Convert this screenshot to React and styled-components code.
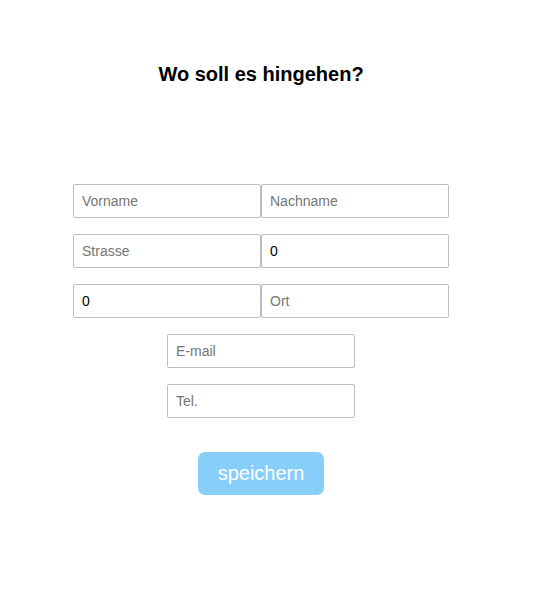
import React from "react";
import styled, { createGlobalStyle } from "styled-components";

const Global = createGlobalStyle`
  body { margin: 0; background: #fff; font-family: "Liberation Sans", Arial, sans-serif; }
`;

const Page = styled.div`
  width: 522px;
  display: flex;
  flex-direction: column;
  align-items: center;
  padding-top: 63px;
`;

const Title = styled.h1`
  margin: 0;
  font-size: 20px;
  line-height: 23px;
  font-weight: bold;
  color: #000;
`;

const Form = styled.form`
  margin-top: 98px;
  display: flex;
  flex-direction: column;
  align-items: center;
  gap: 16px;
`;

const Row = styled.div`
  display: flex;
`;

const Input = styled.input`
  box-sizing: border-box;
  width: 188px;
  height: 34px;
  margin: 0;
  padding: 0 8px;
  border: 1px solid #bdbdbd;
  border-radius: 2px;
  font-family: "Liberation Sans", Arial, sans-serif;
  font-size: 14px;
  color: #000;
  background: #fff;
  outline: none;
  &::placeholder { color: #757575; }
`;

const Button = styled.button`
  margin-top: 18px;
  height: 43px;
  padding: 0 20px;
  border: none;
  border-radius: 7px;
  background: #87cefa;
  color: #fff;
  font-family: "Liberation Sans", Arial, sans-serif;
  font-size: 20px;
  cursor: pointer;
`;

export default function App() {
  return (
    <>
      <Global />
      <Page>
        <Title>Wo soll es hingehen?</Title>
        <Form onSubmit={(e) => e.preventDefault()}>
          <Row>
            <Input placeholder="Vorname" />
            <Input placeholder="Nachname" />
          </Row>
          <Row>
            <Input placeholder="Strasse" />
            <Input type="number" defaultValue="0" />
          </Row>
          <Row>
            <Input type="number" defaultValue="0" />
            <Input placeholder="Ort" />
          </Row>
          <Input placeholder="E-mail" />
          <Input placeholder="Tel." />
          <Button type="submit">speichern</Button>
        </Form>
      </Page>
    </>
  );
}
